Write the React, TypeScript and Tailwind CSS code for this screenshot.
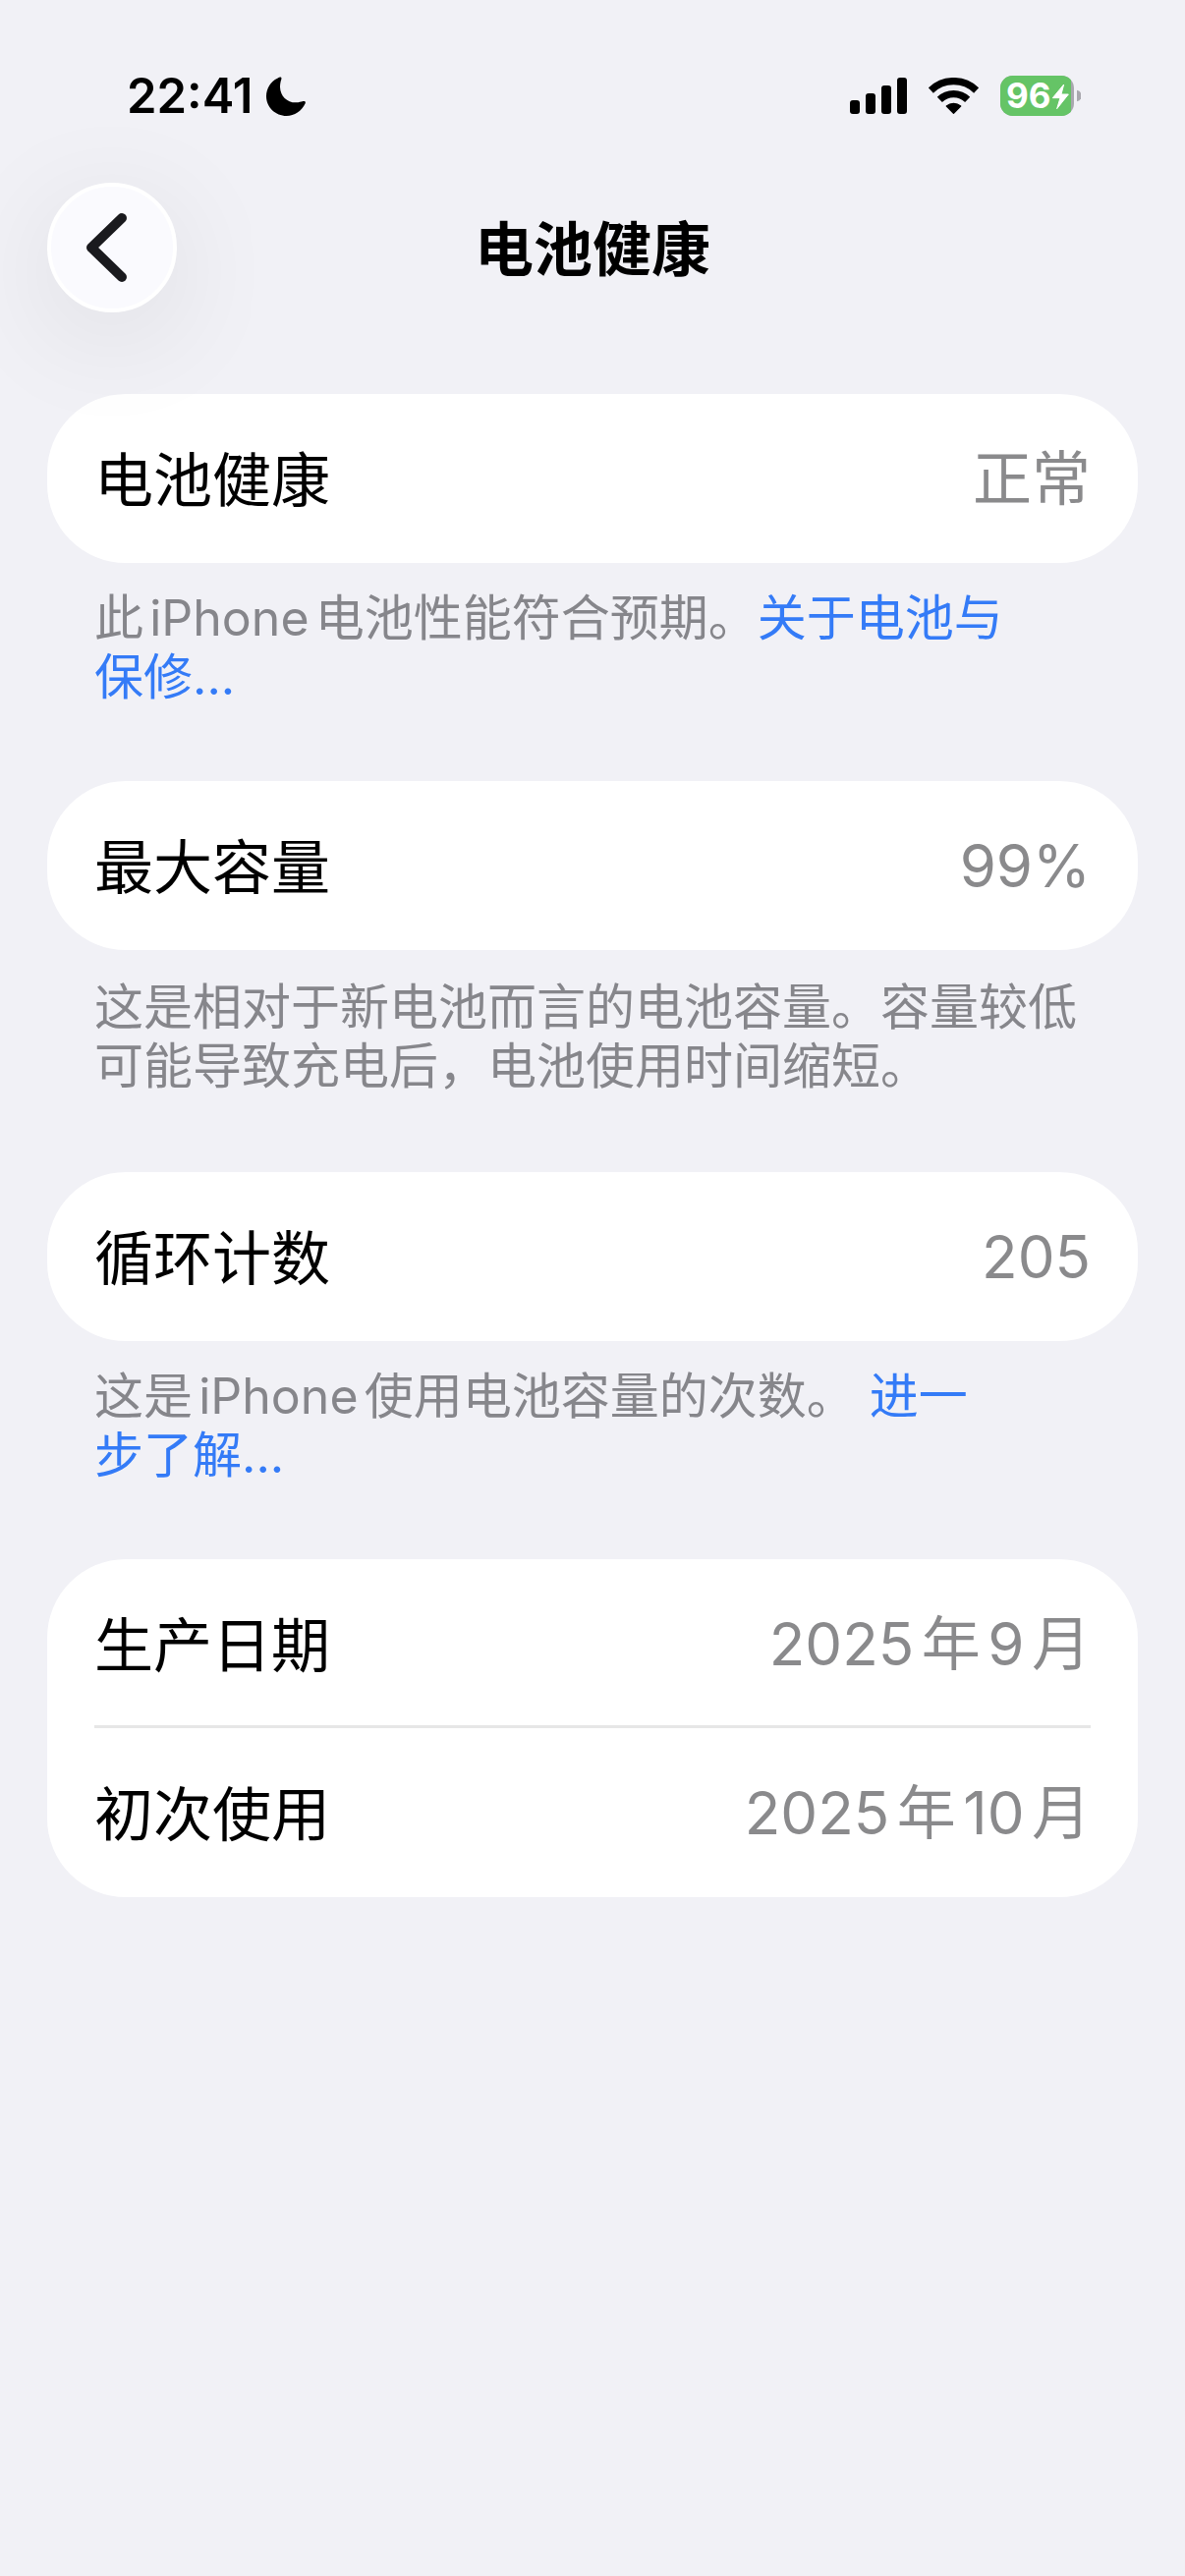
import type { ReactNode } from "react";

function Moon() {
  return (
    <svg className="w-10 h-10" viewBox="0 0 120 120" fill="currentColor">
      <path d="M34 5C42 0 48 0 46 8C43 16 42 25 42 32C43 60 64 80 92 79C100 79 106 77 110 76C117 74 121 76 119 82C108 106 86 120 62 120C28 120 0 93 0 60C0 35 14 14 34 5Z" />
    </svg>
  );
}

function Signal() {
  return (
    <svg className="w-[58px] h-[37px]" viewBox="0 0 58 37" fill="currentColor">
      <rect x="0" y="23" width="10" height="14" rx="3" />
      <rect x="16" y="16" width="10" height="21" rx="3" />
      <rect x="32" y="8" width="10" height="29" rx="3" />
      <rect x="48" y="0" width="10" height="37" rx="3" />
    </svg>
  );
}

function Wifi() {
  return (
    <svg className="w-[51px] h-[37px]" viewBox="0 0 151 111" fill="none">
      <g stroke="currentColor" strokeWidth="22">
        <path d="M6 39A100 100 0 0 1 145 39" />
        <path d="M33 67A61 61 0 0 1 118 67" />
      </g>
      <path
        d="M75.5 109L54 87A33 33 0 0 1 97 87Z"
        fill="currentColor"
        stroke="currentColor"
        strokeWidth="4"
        strokeLinejoin="round"
      />
    </svg>
  );
}

function Battery() {
  return (
    <div className="relative w-[82px] h-[41px]">
      <svg className="w-full h-full" viewBox="0 0 246 123">
        <clipPath id="body">
          <rect width="225" height="123" rx="38" />
        </clipPath>
        <g clipPath="url(#body)">
          <rect width="225" height="123" fill="#a9a8ae" />
          <rect width="216" height="123" fill="#65c466" />
        </g>
        <path d="M234 44A18 18 0 0 1 234 79Z" fill="#a9a8ae" />
        <path
          d="M194 27L160 68H183L173 101L208 57H186Z"
          fill="#fff"
          stroke="#fff"
          strokeWidth="3"
          strokeLinejoin="round"
        />
      </svg>
      <span className="absolute left-1.5 top-0 text-[35px] leading-[41px] font-bold text-white">
        96
      </span>
    </div>
  );
}

function Card({ children }: { children: ReactNode }) {
  return <dl className="bg-white rounded-[80px] px-12">{children}</dl>;
}

function Row({ label, value }: { label: string; value: string }) {
  return (
    <div className="flex items-center justify-between h-[172px] text-[60px]">
      <dt className="pt-[3px] text-black">{label}</dt>
      <dd className="text-[#8a8a8c]">{value}</dd>
    </div>
  );
}

function MoreLink({ children }: { children: ReactNode }) {
  return (
    <a href="#" className="text-[#347bf7] [text-autospace:no-autospace]">
      {children}
    </a>
  );
}

export default function App() {
  return (
    <div
      lang="zh-CN"
      className="min-h-screen bg-[#f1f1f6] text-black font-['Inter','Noto_Sans_CJK_SC',sans-serif] [text-autospace:normal]"
    >
      <div className="flex items-center justify-between pt-[77px] pl-[129px] pr-[106px]">
        <div className="flex items-center gap-3.5 h-[41px]">
          <span className="text-[49px] leading-[41px] font-semibold">22:41</span>
          <Moon />
        </div>
        <div className="flex items-center gap-[22px]">
          <Signal />
          <Wifi />
          <Battery />
        </div>
      </div>

      <header className="grid grid-cols-[132px_1fr_132px] items-center px-12 pt-[68px]">
        <button
          aria-label="返回"
          className="w-[132px] h-[132px] rounded-full bg-[#fafafe] border-4 border-white shadow-[0_24px_120px_rgba(0,0,0,0.09)] flex items-center justify-center"
        >
          <svg
            className="w-[124px] h-[124px]"
            viewBox="4 4 124 124"
            fill="none"
            stroke="#1a1a1e"
            strokeWidth="10"
            strokeLinecap="round"
            strokeLinejoin="round"
          >
            <path d="M76 36L45 66L76 96" />
          </svg>
        </button>
        <h1 className="pt-[3px] text-center text-[60px] leading-[60px] font-semibold">电池健康</h1>
      </header>

      <main className="px-12 pt-[83px]">
        <section>
          <Card>
            <Row label="电池健康" value="正常" />
          </Card>
          <p className="px-12 pt-[26px] pb-[76px] text-[50px] leading-[60px] text-[#86868b]">
            此iPhone电池性能符合预期。
            <MoreLink>
              关于电池与
              <br />
              保修...
            </MoreLink>
          </p>
        </section>

        <section>
          <Card>
            <Row label="最大容量" value="99%" />
          </Card>
          <p className="px-12 pt-7 pb-[78px] text-[50px] leading-[60px] text-[#86868b]">
            这是相对于新电池而言的电池容量。容量较低可能导致充电后，电池使用时间缩短。
          </p>
        </section>

        <section>
          <Card>
            <Row label="循环计数" value="205" />
          </Card>
          <p className="px-12 pt-[26px] pb-[76px] text-[50px] leading-[60px] text-[#86868b]">
            这是iPhone使用电池容量的次数。{" "}
            <MoreLink>
              进一
              <br />
              步了解...
            </MoreLink>
          </p>
        </section>

        <section>
          <Card>
            <Row label="生产日期" value="2025年9月" />
            <div className="-mt-[3px] h-[3px] bg-[#e6e6e6]" />
            <Row label="初次使用" value="2025年10月" />
          </Card>
        </section>
      </main>
    </div>
  );
}
